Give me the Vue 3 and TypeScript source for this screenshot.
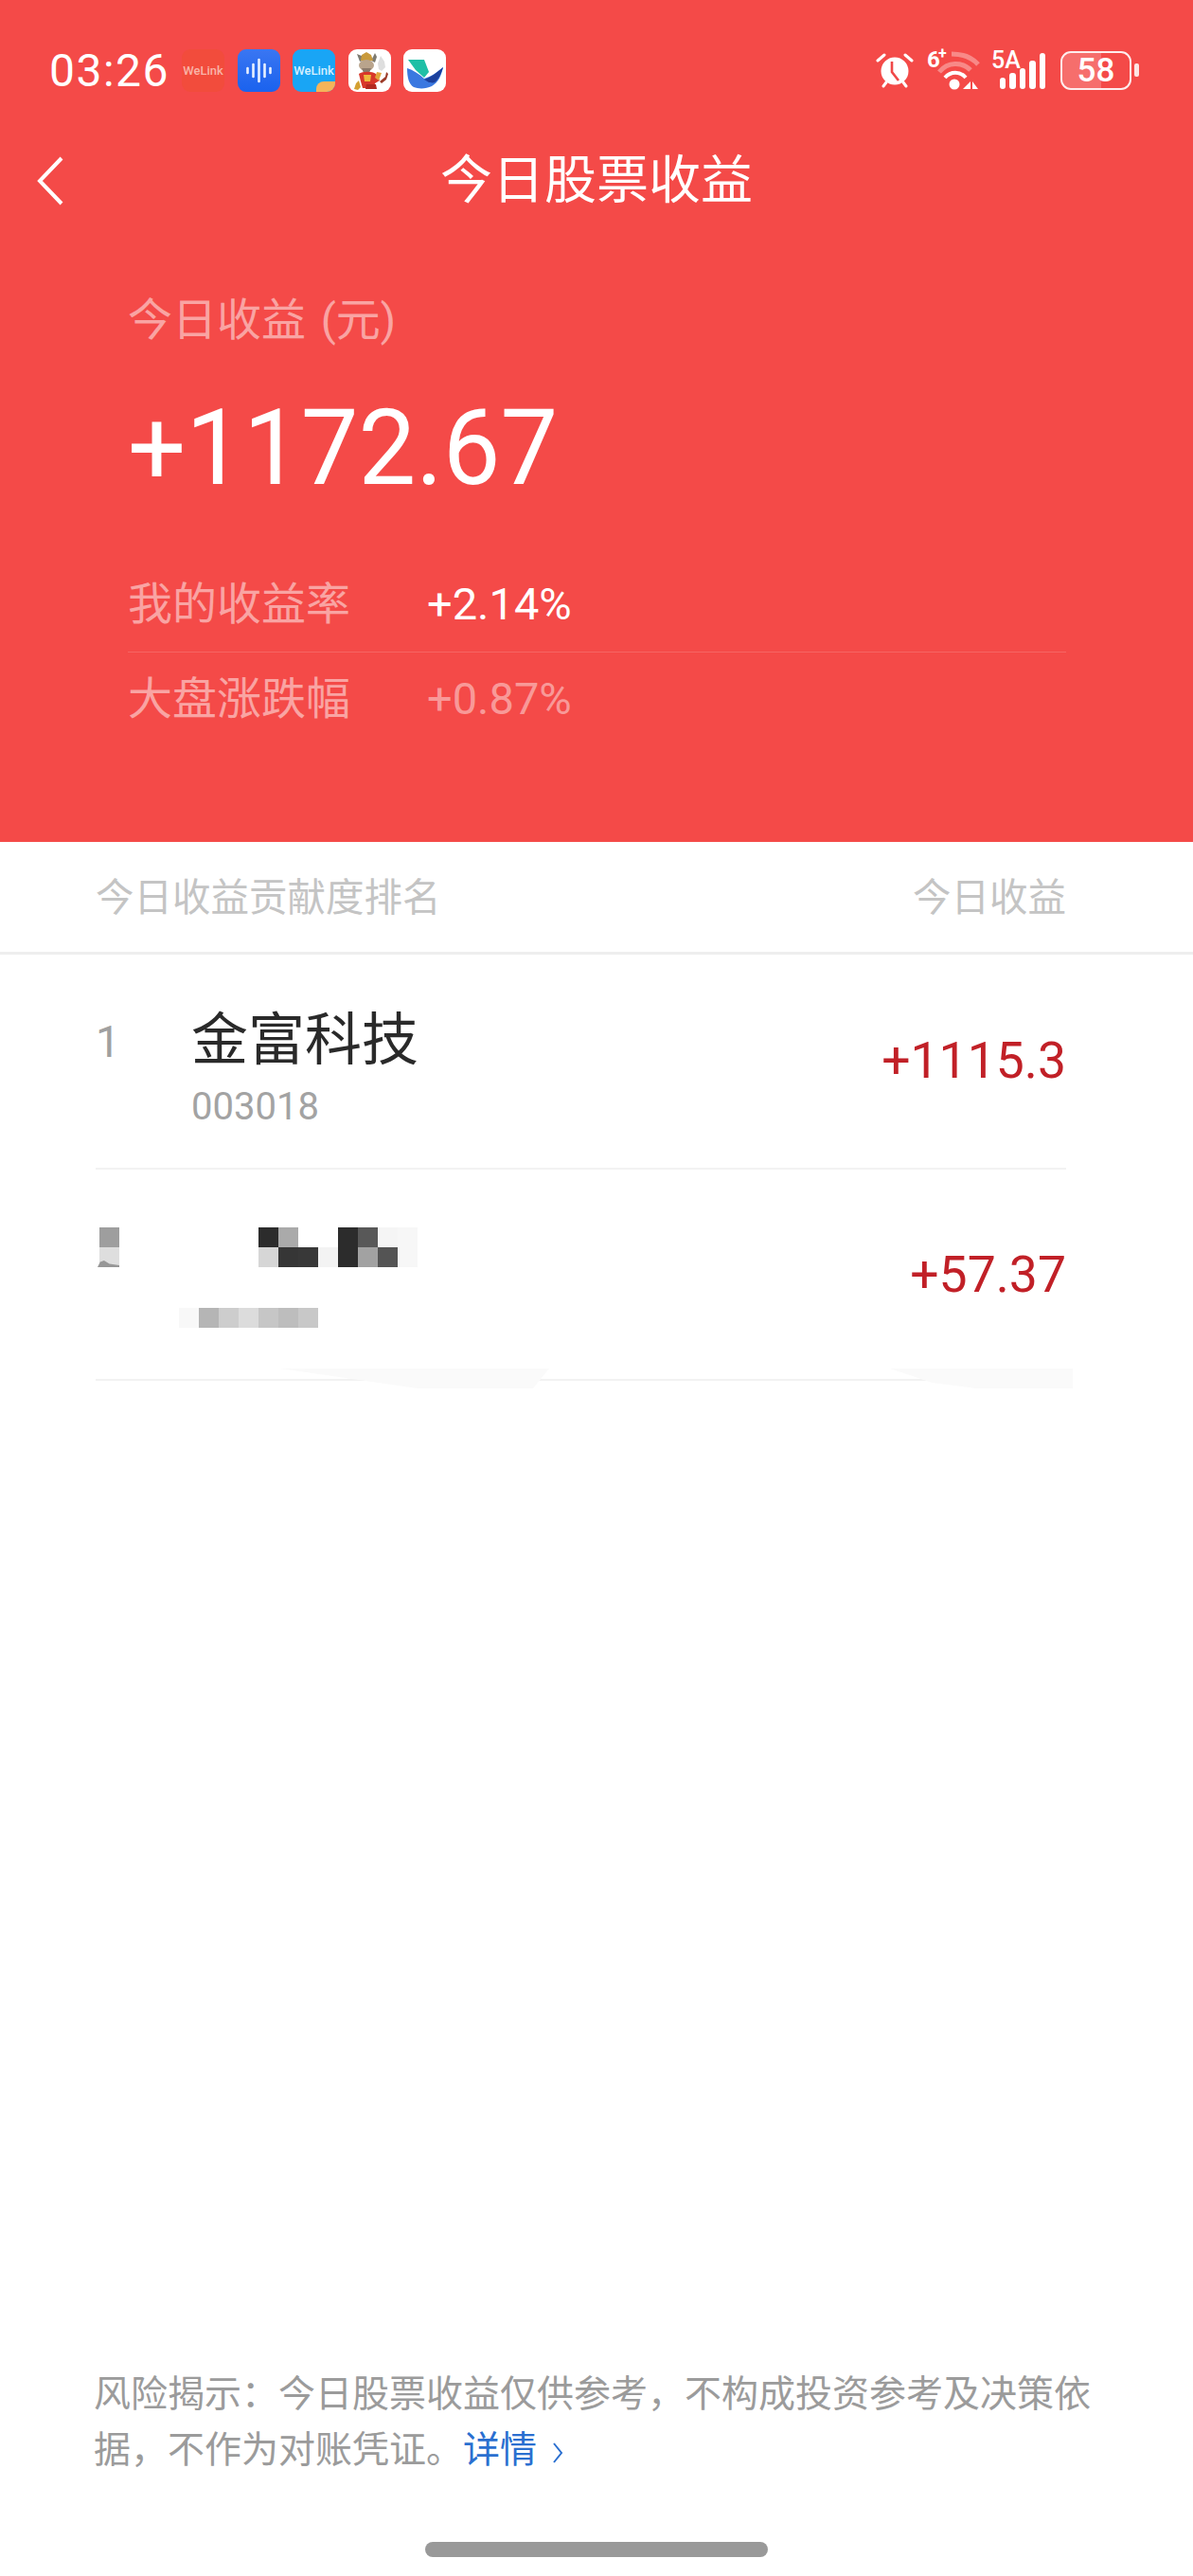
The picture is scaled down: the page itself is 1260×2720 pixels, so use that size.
<template>
  <div class="page">
    <header class="hero">
      <div class="status-bar">
        <div class="status-left">
          <span class="clock">03:26</span>
          <div class="app-icons">
            <span class="app-icon welink-red">WeLink</span>
            <span class="app-icon voice">
              <svg viewBox="0 0 45 45" width="45" height="45">
                <path d="M10.5 20v5M16.5 16v13M22.5 11v23M28.5 16v13M34.5 20v5" stroke="#e8f0ff" stroke-width="2.6" stroke-linecap="round" fill="none" />
              </svg>
            </span>
            <span class="app-icon welink-blue">WeLink<i class="corner"></i></span>
            <span class="app-icon mascot">
              <svg viewBox="0 0 45 45" width="45" height="45">
                <path d="M9 5l3 8 4-1-2-5zM28 4l-4 8 4 2 2-6z" fill="#7d7a70" />
                <path d="M14 6l5-3 5 3 2 6H13z" fill="#c99a3c" />
                <ellipse cx="19" cy="17" rx="8" ry="6" fill="#b9a48c" />
                <path d="M14 20h10l-2 5h-6z" fill="#8c7b6c" />
                <path d="M11 26c4-3 14-3 18 0l4 7-5 3-1 5H15l-2-7z" fill="#d8382a" />
                <path d="M16 27h8l-1 7h-6z" fill="#efb93c" />
                <path d="M31 15l3-8 4 6 1 6-4 4-3-2z" fill="#dedede" />
                <path d="M30 24l5 1-3 8-4-3z" fill="#e2a63c" />
                <path d="M33 34l6-5 1-5 2 2-2 6-5 4z" fill="#9c3a28" />
                <path d="M11 33l2 7-3 3-4-1 2-6z" fill="#d4a032" />
                <path d="M19 37h10l1 5H18z" fill="#b32a20" />
              </svg>
            </span>
            <span class="app-icon bird">
              <svg viewBox="0 0 45 45" width="45" height="45">
                <path d="M5 11h17l5 13-5 6-9-8z" fill="#1fbfa6" />
                <path d="M4 20c6 2 13 6 18 11 7-2 14-7 20-12-2 9-5 16-12 20-6 3-14 3-19 1-5-3-7-10-7-20z" fill="#3a78e0" />
                <path d="M22 32c7-2 14-8 20-13-2 7-5 13-9 16-2 1-5 0-6 0z" fill="#1b3f9c" />
              </svg>
            </span>
          </div>
        </div>
        <div class="status-right">
          <svg class="alarm" viewBox="0 0 40 40" width="40" height="40">
            <path d="M2 10l7-6M38 10l-7-6M8 37l3-4M32 37l-3-4" stroke="#fff" stroke-width="3" stroke-linecap="round" fill="none" />
            <circle cx="20" cy="21" r="14.5" fill="#fff" />
            <path d="M17 11v11l7 9" stroke="#f04848" stroke-width="2.6" fill="none" />
          </svg>
          <svg class="wifi" viewBox="0 0 55 46" width="55" height="46">
            <text x="0" y="20" class="mini">6</text>
            <text x="12" y="11" class="mini-plus">+</text>
            <path d="M26 6c10 0 21 3 28 11" stroke="#fff" stroke-opacity=".35" stroke-width="5" fill="none" />
            <path d="M13 25c9-11 24-11 33-2" stroke="#fff" stroke-opacity=".35" stroke-width="5" fill="none" />
            <path d="M19 31c6-7 16-7 22 0" stroke="#fff" stroke-width="4" fill="none" />
            <circle cx="29" cy="38" r="5.5" fill="#fff" />
            <path d="M46 35v8h-8zM48 35l6 8h-6z" fill="#fff" />
          </svg>
          <div class="signal">
            <span class="signal-label">5A</span>
            <i class="bar b1"></i><i class="bar b2"></i><i class="bar b3"></i><i class="bar b4"></i><i class="bar b5"></i>
          </div>
          <div class="battery">
            <div class="battery-body">
              <i class="battery-fill"></i>
              <span class="battery-num">58</span>
            </div>
            <i class="battery-cap"></i>
          </div>
        </div>
      </div>

      <div class="nav">
        <svg class="back" viewBox="0 0 30 54" width="30" height="54">
          <path d="M27 3L4 27l23 24" stroke="#fff" stroke-width="4" fill="none" />
        </svg>
        <h1 class="nav-title">今日股票收益</h1>
      </div>

      <div class="summary">
        <div class="summary-label">今日收益 (元)</div>
        <div class="summary-value">+1172.67</div>
        <div class="metric metric-first">
          <span class="metric-name">我的收益率</span>
          <span class="metric-value">+2.14%</span>
        </div>
        <div class="metric metric-second">
          <span class="metric-name">大盘涨跌幅</span>
          <span class="metric-value dim">+0.87%</span>
        </div>
      </div>
    </header>

    <div class="table-head">
      <span>今日收益贡献度排名</span>
      <span>今日收益</span>
    </div>

    <section class="rows">
      <div class="row row-first">
        <span class="rank">1</span>
        <div class="stock">
          <div class="stock-name">金富科技</div>
          <div class="stock-code">003018</div>
        </div>
        <span class="gain">+1115.3</span>
      </div>
      <div class="row row-second">
        <div class="mosaic-wrap">
          <div class="mosaic-top">
            <div class="px-col">
              <i v-for="(c, i) in edgeCells" :key="i" :style="{ background: c }"></i>
              <b class="px-smear"></b>
            </div>
            <div class="px-grid">
              <i v-for="(c, i) in nameCells" :key="i" :style="{ background: c }"></i>
            </div>
          </div>
          <div class="px-code">
            <i v-for="(c, i) in codeCells" :key="i" :style="{ background: c }"></i>
          </div>
        </div>
        <span class="gain">+57.37</span>
      </div>
      <!-- faint leftovers of the retouching, they sit over the divider -->
      <i class="ghost ghost-a"></i>
      <i class="ghost ghost-b"></i>
    </section>

    <footer class="footer">
      <p class="risk">风险揭示：今日股票收益仅供参考，不构成投资参考及决策依据，不作为对账凭证。<a class="more">详情<svg viewBox="0 0 14 26" width="14" height="26"><path d="M3 3l8 10-8 10" stroke="#2a6fd0" stroke-width="2" fill="none" /></svg></a></p>
      <div class="home-bar"></div>
    </footer>
  </div>
</template>

<script setup lang="ts">
// pixelated stand-ins for the blurred second stock
const edgeCells: string[] = ['#9e9e9e', '#dedede']
const nameCells: string[] = [
  '#2c2c2c', '#aaaaaa', '#ffffff', '#ffffff', '#2c2c2c', '#585858', '#f5f5f5', '#f7f7f7',
  '#d6d6d6', '#363636', '#383838', '#f3f3f3', '#2c2c2c', '#a2a2a2', '#545454', '#f7f7f7'
]
const codeCells: string[] = ['#f8f8f8', '#b5b5b5', '#cdcdcd', '#dcdcdc', '#c6c6c6', '#bdbdbd', '#c8c8c8']
</script>

<style>
html,
body {
  margin: 0;
  background: #fff;
}
</style>

<style scoped>
.page {
  width: 1260px;
  height: 2720px;
  display: flex;
  flex-direction: column;
  background: #fff;
  font-family: "Roboto", "Noto Sans CJK SC", sans-serif;
  overflow: hidden;
}

/* Red header */
.hero {
  height: 889px;
  flex-shrink: 0;
  background: #f44a48;
  color: #fff;
  box-sizing: border-box;
  padding-top: 51px;
}

.status-bar {
  height: 46px;
  padding: 0 57px 0 52px;
  display: flex;
  align-items: center;
  justify-content: space-between;
}

.status-left {
  display: flex;
  align-items: center;
}

.clock {
  width: 140px;
  font-size: 48px;
  font-weight: 400;
  letter-spacing: 1.5px;
}

.app-icons {
  display: flex;
  gap: 13.5px;
}

.app-icon {
  position: relative;
  width: 45px;
  height: 45px;
  border-radius: 9px;
  overflow: hidden;
  display: flex;
  align-items: center;
  justify-content: center;
  font-size: 13px;
  font-weight: 500;
}

.app-icon svg {
  flex-shrink: 0;
}

.welink-red {
  background: #f24c3c;
  color: #f9b4a8;
}

.voice {
  background: linear-gradient(#3a76f2, #1a62ee);
}

.welink-blue {
  background: #19a5f5;
  color: #d4efff;
}

.corner {
  position: absolute;
  right: 0;
  bottom: 0;
  width: 20px;
  height: 11px;
  background: #f5b45a;
  border-top-left-radius: 8px;
}

.mascot,
.bird {
  background: #fff;
}

.status-right {
  display: flex;
  align-items: center;
}

.wifi {
  margin-left: 14px;
  overflow: visible;
}

.mini {
  font-size: 24px;
  font-weight: 700;
  fill: #fff;
}

.mini-plus {
  font-size: 16px;
  font-weight: 700;
  fill: #fff;
}

.signal {
  position: relative;
  width: 57px;
  height: 40px;
  margin-left: 13px;
  display: flex;
  align-items: flex-end;
  justify-content: flex-end;
  gap: 4px;
}

.signal-label {
  position: absolute;
  left: 0;
  top: 0;
  font-size: 25px;
  font-weight: 500;
  line-height: 20px;
}

.bar {
  width: 6.5px;
  background: #fff;
  border-radius: 3px;
}

.b1 { height: 12px; }
.b2 { height: 17px; }
.b3 { height: 22px; }
.b4 { height: 30px; }
.b5 { height: 38px; }

.battery {
  display: flex;
  align-items: center;
  gap: 3px;
  margin-left: 16px;
}

.battery-body {
  position: relative;
  width: 75px;
  height: 41px;
  box-sizing: border-box;
  border: 2.5px solid rgba(255, 255, 255, 0.9);
  border-radius: 11px;
  overflow: hidden;
  display: flex;
  align-items: center;
  justify-content: center;
}

.battery-fill {
  position: absolute;
  left: 0;
  top: 0;
  bottom: 0;
  width: 58%;
  background: rgba(255, 255, 255, 0.2);
}

.battery-num {
  position: relative;
  font-size: 35px;
  font-weight: 500;
  line-height: 1;
}

.battery-cap {
  width: 5px;
  height: 14px;
  background: rgba(255, 255, 255, 0.85);
  border-radius: 2px;
}

.nav {
  position: relative;
  height: 54px;
  margin-top: 66px;
  display: flex;
  align-items: center;
  justify-content: center;
}

.back {
  position: absolute;
  left: 38px;
  top: 1px;
}

.nav-title {
  margin: 0;
  font-size: 55px;
  font-weight: 400;
  line-height: 54px;
}

.summary {
  margin: 0 134px 0 135px;
}

.summary-label {
  margin-top: 96px;
  font-size: 47px;
  line-height: 50px;
  word-spacing: 4px;
  color: rgba(255, 255, 255, 0.5);
}

.summary-value {
  margin-top: 55px;
  font-size: 112px;
  line-height: 110px;
  transform: scaleX(0.965);
  transform-origin: left center;
}

.metric {
  display: flex;
  align-items: center;
}

.metric-first {
  height: 101px;
  margin-top: 59px;
  border-bottom: 1px solid rgba(255, 255, 255, 0.15);
}

.metric-second {
  height: 97px;
}

.metric-name {
  width: 316px;
  margin-bottom: 8px;
  font-size: 47px;
  color: rgba(255, 255, 255, 0.5);
}

.metric-value {
  font-size: 47px;
}

.metric-value.dim {
  color: rgba(255, 255, 255, 0.45);
}

/* Table */
.table-head {
  height: 119px;
  flex-shrink: 0;
  box-sizing: border-box;
  padding: 0 134px 6px 101px;
  display: flex;
  align-items: center;
  justify-content: space-between;
  font-size: 40.5px;
  color: #c4c4c4;
  border-bottom: 3px solid #eeeeee;
}

.rows {
  position: relative;
  margin: 0 134px 0 101px;
}

.row {
  display: flex;
  border-bottom: 2px solid #f2f2f2;
}

.row-first {
  height: 227px;
  box-sizing: border-box;
}

.row-second {
  height: 223px;
  box-sizing: border-box;
}

.rank {
  width: 101px;
  padding-top: 66px;
  font-size: 46px;
  line-height: 52px;
  color: #a0a0a0;
}

.stock {
  flex: 1;
  padding-top: 53px;
}

.stock-name {
  font-size: 60px;
  line-height: 76px;
  color: #2a2a2a;
}

.stock-code {
  margin-top: 9px;
  font-size: 40px;
  line-height: 46px;
  color: #a3a3a3;
}

.gain {
  margin-left: auto;
  padding-top: 82px;
  font-size: 53.5px;
  line-height: 60px;
  color: #c12027;
}

.mosaic-wrap {
  padding-top: 61px;
}

.mosaic-top {
  display: flex;
}

.px-col {
  position: relative;
  width: 21px;
  display: grid;
  grid-template-rows: 21px 21px;
  margin-left: 4px;
}

.px-col i,
.px-grid i,
.px-code i {
  display: block;
}

.px-smear {
  position: absolute;
  left: -2px;
  top: 35px;
  width: 23px;
  height: 7px;
  background: #979797;
  clip-path: polygon(0 100%, 12% 20%, 30% 0, 55% 50%, 100% 70%, 100% 100%);
}

.px-grid {
  margin-left: 147px;
  display: grid;
  grid-template-columns: repeat(8, 21px);
  grid-template-rows: repeat(2, 21px);
}

.px-code {
  margin: 43px 0 0 88px;
  display: grid;
  grid-template-columns: repeat(7, 21px);
  grid-auto-rows: 21px;
}

.row-second .gain {
  padding-top: 81px;
}

.ghost {
  position: absolute;
  top: 437px;
  height: 21px;
  background: #fafafa;
}

.ghost-a {
  left: 195px;
  width: 284px;
  clip-path: polygon(0 0, 100% 0, 94% 100%, 51% 100%);
}

.ghost-b {
  left: 839px;
  width: 193px;
  clip-path: polygon(0 0, 100% 0, 100% 100%, 47% 100%, 23% 71%);
}

/* Footer */
.footer {
  margin-top: auto;
  padding: 0 100px 0 99px;
}

.risk {
  margin: 0;
  font-size: 39px;
  line-height: 59px;
  color: #9b9b9b;
}

.more {
  color: #2a6fd0;
}

.more svg {
  margin-left: 15px;
  vertical-align: -3px;
}

.home-bar {
  width: 362px;
  height: 16px;
  margin: 67px auto 20px;
  background: #999999;
  border-radius: 8px;
}
</style>
